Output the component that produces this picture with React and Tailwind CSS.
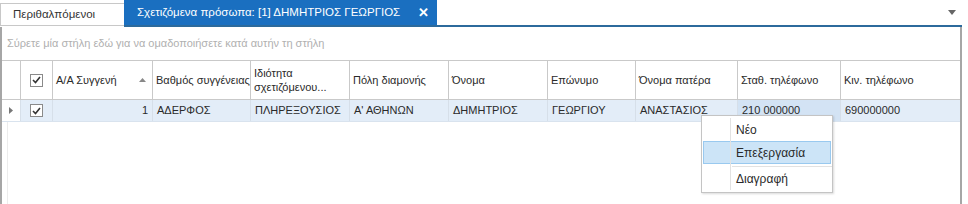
import React from "react";

const cols = [
  { w: 18, key: "ind" },
  { w: 32, key: "chk" },
  { w: 100, label: "A/A Συγγενή", sort: true },
  { w: 98, label: "Βαθμός συγγένειας" },
  { w: 99, label: "Ιδιότητα σχετιζόμενου...", two: true },
  { w: 99, label: "Πόλη διαμονής" },
  { w: 99, label: "Όνομα" },
  { w: 88, label: "Επώνυμο" },
  { w: 102, label: "Όνομα πατέρα" },
  { w: 103, label: "Σταθ. τηλέφωνο" },
  { w: 120, label: "Κιν. τηλέφωνο" },
];

const rowVals = [null, "chk", "1", "ΑΔΕΡΦΟΣ", "ΠΛΗΡΕΞΟΥΣΙΟΣ", "Α' ΑΘΗΝΩΝ", "ΔΗΜΗΤΡΙΟΣ", "ΓΕΩΡΓΙΟΥ", "ΑΝΑΣΤΑΣΙΟΣ", "210 000000", "690000000"];

function Check() {
  return (
    <div className="w-[13px] h-[13px] border border-[#8a8a8a] bg-white flex items-center justify-center">
      <svg width="9" height="8" viewBox="0 0 9 8">
        <path d="M1 4 L3.5 6.5 L8 1" fill="none" stroke="#333" strokeWidth="1.6" />
      </svg>
    </div>
  );
}

export default function App() {
  return (
    <div className="w-[968px] h-[204px] bg-white relative overflow-hidden text-[11px] text-[#2a2a2a] whitespace-nowrap" style={{ fontFamily: '"Liberation Sans", Arial, sans-serif' }}>
      {/* tab bar */}
      <div className="flex h-[25px] items-end">
        <div className="w-[124px] h-[22px] border-t border-l border-[#c8c8c8] flex items-center pl-[12px] text-[#333] text-[11.5px]">Περιθαλπόμενοι</div>
        <div className="w-[313px] h-[25px] bg-[#1a6fc0] text-white flex items-center pl-[13px] text-[11.5px]">
          <span>Σχετιζόμενα πρόσωπα: [1] ΔΗΜΗΤΡΙΟΣ ΓΕΩΡΓΙΟΣ</span>
          <span className="ml-auto mr-[8px] font-bold text-[13px]">✕</span>
        </div>
        <div className="flex-1 h-[25px] flex items-center justify-end pr-[12px]">
          <svg width="8" height="5" viewBox="0 0 8 5"><path d="M0 0 H8 L4 5 Z" fill="#666" /></svg>
        </div>
      </div>
      <div className="flex">
        <div className="w-[124px] h-[2px] border-t border-[#c8c8c8]"></div>
        <div className="w-[838px] h-[2px] bg-[#2c6a9c]"></div>
      </div>
      {/* content */}
      <div className="w-[962px] h-[177px] border-l-2 border-r-2 border-[#a6a6a6] flex flex-col">
        <div className="h-[33px] flex items-center pl-[5px] text-[#b0b0b0] text-[11px]">Σύρετε μία στήλη εδώ για να ομαδοποιήσετε κατά αυτήν τη στήλη</div>
        {/* header */}
        <div className="flex h-[40px] border-t border-b border-[#c9c9c9]">
          {cols.map((c, i) => (
            <div key={i} className={`shrink-0 h-full flex items-center overflow-hidden ${i > 0 ? "border-l border-[#c9c9c9]" : ""} ${c.key === "chk" ? "justify-center" : "pl-[3px]"}`} style={{ width: c.w }}>
              {c.key === "chk" && <Check />}
              {c.label && !c.two && <span>{c.label}</span>}
              {c.two && <span className="leading-[14px]">Ιδιότητα<br />σχετιζόμενου...</span>}
              {c.sort && (
                <svg className="ml-auto mr-[6px]" width="7" height="4" viewBox="0 0 7 4"><path d="M0 4 L3.5 0 L7 4 Z" fill="#888" /></svg>
              )}
            </div>
          ))}
        </div>
        {/* row */}
        <div className="flex h-[22px] border-b border-[#d9e3ee]">
          {rowVals.map((v, i) => (
            <div key={i} className={`shrink-0 h-full flex items-center overflow-hidden ${i > 0 ? "border-l border-[#d6dfe9]" : ""} ${i === 0 ? "bg-white justify-center" : i === 9 ? "bg-[#d3e3f4]" : "bg-[#e3edf8]"} ${i === 1 ? "justify-center" : ""} ${i === 2 ? "justify-end pr-[4px]" : i > 2 ? "pl-[4px]" : ""}`} style={{ width: cols[i].w }}>
              {i === 0 && <svg width="4" height="7" viewBox="0 0 4 7"><path d="M0 0 L4 3.5 L0 7 Z" fill="#777" /></svg>}
              {v === "chk" && <Check />}
              {i > 1 && <span>{v}</span>}
            </div>
          ))}
        </div>
        <div className="flex-1 flex">
          <div className="w-[5px]"></div>
          <div className="border-l border-[#ececec] flex-1"></div>
        </div>
      </div>
      {/* context menu */}
      <div className="absolute left-[701px] top-[115px] w-[132px] h-[78px] bg-white border border-[#c4c4c4] shadow-[1px_1px_2px_rgba(0,0,0,0.15)] flex flex-col py-[2px] text-[12px]">
        <div className="absolute left-[28px] top-[2px] bottom-[2px] w-px bg-[#e2e2e2]"></div>
        <div className="h-[24px] flex items-center pl-[34px]">Νέο</div>
        <div className="h-[23px] mx-[1px] bg-[#cce4f7] border border-[#99c9ef] flex items-center pl-[32px]">Επεξεργασία</div>
        <div className="h-[5px] flex items-center pl-[30px]"><div className="h-px w-full bg-[#e2e2e2]"></div></div>
        <div className="h-[22px] flex items-center pl-[34px]">Διαγραφή</div>
      </div>
    </div>
  );
}
